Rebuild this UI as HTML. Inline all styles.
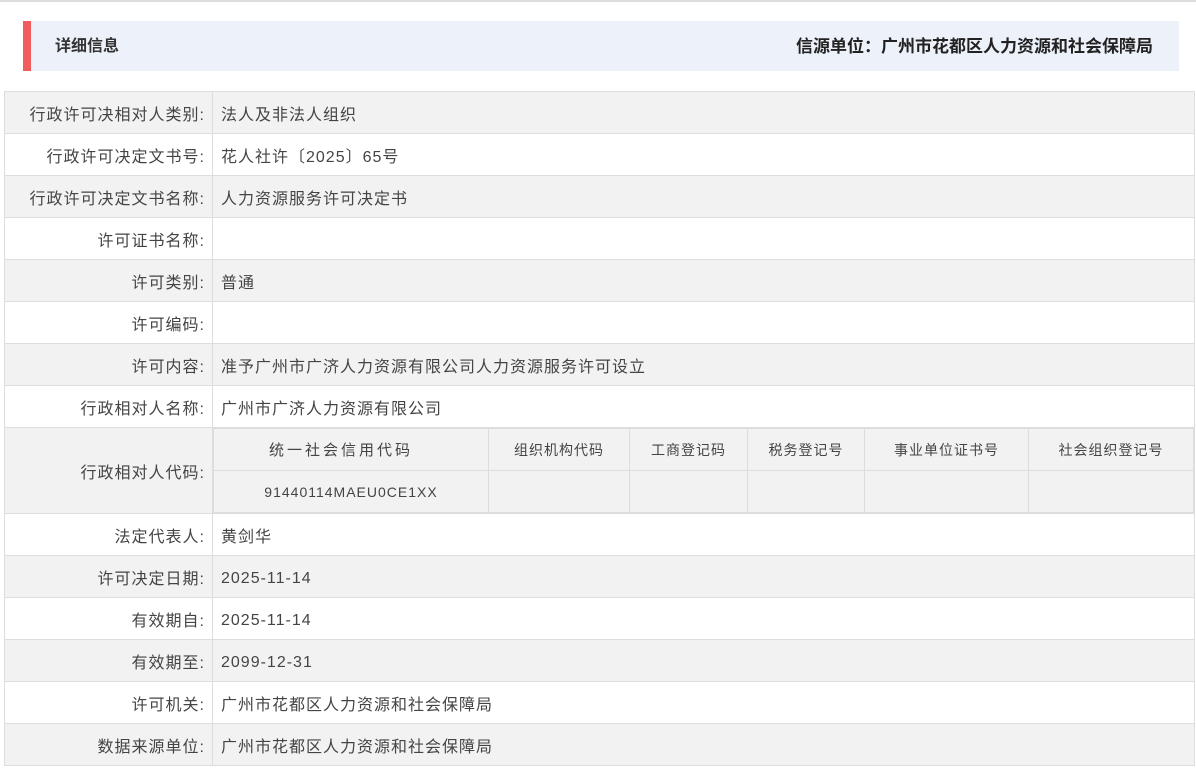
<!DOCTYPE html>
<html><head><meta charset="utf-8"><style>
*{margin:0;padding:0;box-sizing:border-box}
body{width:1196px;height:769px;background:#fff;font-family:"Liberation Sans","Noto Sans CJK SC",sans-serif;color:#333;position:relative;overflow:hidden}
.tl{position:absolute;left:0;top:0;width:1196px;height:2px;background:#ddd}
.hd{position:absolute;left:23px;top:21px;width:1156px;height:50px;background:#edf2fa;border-left:8px solid #f25c5c}
.hd .l{position:absolute;left:24px;top:1px;line-height:50px;font-size:16px;font-weight:bold;color:#333}
.hd .r{position:absolute;right:26px;top:1px;line-height:50px;font-size:17px;font-weight:bold;color:#222}
table.m{position:absolute;left:4px;top:91px;width:1191px;border-collapse:collapse;font-size:16px;color:#444}
table.m>tbody>tr>td{border:1px solid #ddd;height:42px;padding:0 8px;letter-spacing:1px}
table.m>tbody>tr>td.k{width:209px;text-align:right;padding-right:7px}
table.m>tbody>tr:nth-child(odd){background:#f2f2f2}
table.m>tbody>tr:nth-child(even){background:#fff}
table.in{width:981px;border-collapse:collapse;font-size:14px;color:#444;text-align:center;background:#f2f2f2}
table.in td{border:1px solid #ddd;height:42px;letter-spacing:1px}
td.cc{padding:0!important}
.n{position:relative;top:2px}
</style></head><body>
<div class="tl"></div>
<div class="hd"><div class="l">详细信息</div><div class="r">信源单位：广州市花都区人力资源和社会保障局</div></div>
<table class="m"><tbody>
<tr><td class="k">行政许可决相对人类别:</td><td>法人及非法人组织</td></tr>
<tr><td class="k">行政许可决定文书号:</td><td>花人社许〔2025〕65号</td></tr>
<tr><td class="k">行政许可决定文书名称:</td><td>人力资源服务许可决定书</td></tr>
<tr><td class="k">许可证书名称:</td><td></td></tr>
<tr><td class="k">许可类别:</td><td>普通</td></tr>
<tr><td class="k">许可编码:</td><td></td></tr>
<tr><td class="k">许可内容:</td><td>准予广州市广济人力资源有限公司人力资源服务许可设立</td></tr>
<tr><td class="k">行政相对人名称:</td><td>广州市广济人力资源有限公司</td></tr>
<tr><td class="k" style="height:86px">行政相对人代码:</td><td class="cc"><table class="in"><tr><td style="width:275px;letter-spacing:3px;padding-right:20px;font-size:15px">统一社会信用代码</td><td style="width:141px">组织机构代码</td><td style="width:118px">工商登记码</td><td style="width:117px">税务登记号</td><td style="width:164px">事业单位证书号</td><td>社会组织登记号</td></tr><tr><td>91440114MAEU0CE1XX</td><td></td><td></td><td></td><td></td><td></td></tr></table></td></tr>
<tr><td class="k">法定代表人:</td><td>黄剑华</td></tr>
<tr><td class="k">许可决定日期:</td><td><span class="n">2025-11-14</span></td></tr>
<tr><td class="k">有效期自:</td><td><span class="n">2025-11-14</span></td></tr>
<tr><td class="k">有效期至:</td><td><span class="n">2099-12-31</span></td></tr>
<tr><td class="k">许可机关:</td><td>广州市花都区人力资源和社会保障局</td></tr>
<tr><td class="k">数据来源单位:</td><td>广州市花都区人力资源和社会保障局</td></tr>
</tbody></table>
</body></html>
